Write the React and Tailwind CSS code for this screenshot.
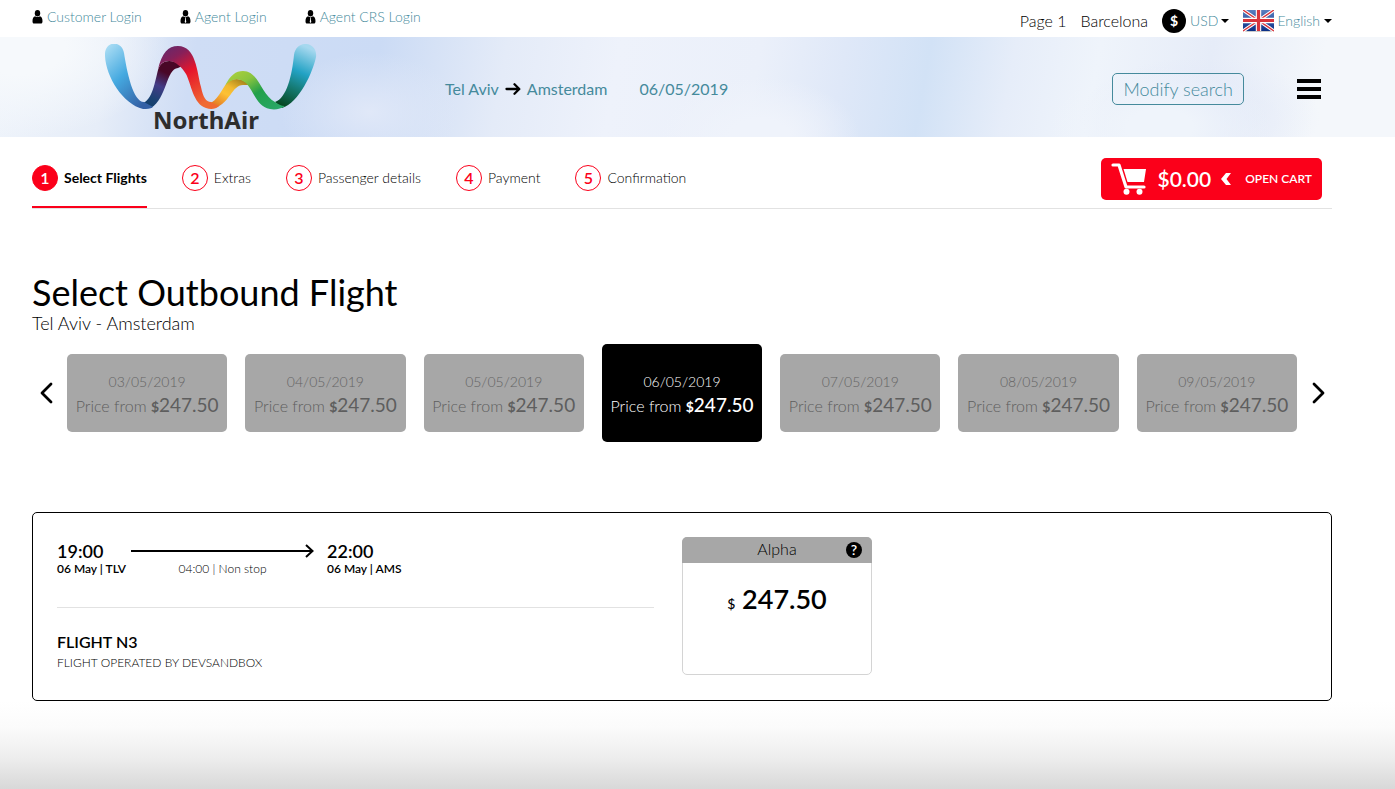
const logins = [
  { label: 'Customer Login', tie: false },
  { label: 'Agent Login', tie: true },
  { label: 'Agent CRS Login', tie: true },
];

const steps = ['Select Flights', 'Extras', 'Passenger details', 'Payment', 'Confirmation'];

const days = [
  '03/05/2019',
  '04/05/2019',
  '05/05/2019',
  '06/05/2019',
  '07/05/2019',
  '08/05/2019',
  '09/05/2019',
];

const selectedDay = '06/05/2019';

function UserIcon({ tie }) {
  return (
    <svg width="11" height="14" viewBox="0 0 10 14" aria-hidden="true">
      <ellipse cx="5" cy="3.2" rx="2.7" ry="3.2" />
      <path d="M0 11.2C0 8 1 6.6 2.6 6.2C4 7.4 6 7.4 7.4 6.2C9 6.6 10 8 10 11.2C10 13 9.4 13.5 8.4 13.5H1.6C.6 13.5 0 13 0 11.2Z" />
      {tie && <path d="M4.4 7.6H5.6L5.3 8.8L5.8 12L5 13L4.2 12L4.7 8.8Z" fill="#fff" />}
    </svg>
  );
}

function Logo() {
  return (
    <svg width="212" height="66" viewBox="0 0 212 66" role="img" aria-label="NorthAir logo">
      <defs>
        <linearGradient id="sky" x1="0" y1="0" x2=".7" y2="1">
          <stop offset="0" stopColor="#b4e2f6" />
          <stop offset=".5" stopColor="#45a9e0" />
          <stop offset="1" stopColor="#3460a5" />
        </linearGradient>
        <linearGradient id="violet" x1="0" y1="1" x2=".4" y2="0">
          <stop offset="0" stopColor="#0f3f68" />
          <stop offset=".25" stopColor="#1b4273" />
          <stop offset=".55" stopColor="#433c87" />
          <stop offset=".85" stopColor="#490727" />
        </linearGradient>
        <linearGradient id="red" x1="0" y1="0" x2=".6" y2="1">
          <stop offset="0" stopColor="#5c2b70" />
          <stop offset=".25" stopColor="#86205a" />
          <stop offset=".52" stopColor="#e6152b" />
          <stop offset="1" stopColor="#f06a32" />
        </linearGradient>
        <linearGradient id="yellow" x1="0" y1="1" x2=".8" y2="0">
          <stop offset="0" stopColor="#d9601f" />
          <stop offset=".5" stopColor="#fdc135" />
          <stop offset=".7" stopColor="#f0b92f" />
          <stop offset="1" stopColor="#a5821c" />
        </linearGradient>
        <linearGradient id="green" x1="0" y1="0" x2="1" y2="1">
          <stop offset="0" stopColor="#b3d33c" />
          <stop offset=".3" stopColor="#8ac43f" />
          <stop offset=".55" stopColor="#22a04a" />
          <stop offset="1" stopColor="#2aa96c" />
        </linearGradient>
        <linearGradient id="teal" x1=".6" y1="0" x2=".3" y2="1">
          <stop offset="0" stopColor="#a6d8ef" />
          <stop offset=".4" stopColor="#22a2c4" />
          <stop offset=".7" stopColor="#14766b" />
          <stop offset="1" stopColor="#064720" />
        </linearGradient>
      </defs>
      <path d="M38 59C47 56 50 38 53 26C56 16 66 14 77 22L73 24C61 25 62 54 46 64Z" fill="url(#violet)" />
      <path d="M104 59C112 58 116 46 122 39C128 33 138 34 144 41H138C127 41 125 59 110 64Z" fill="url(#yellow)" />
      <path d="M170 58C182 54 187 31 189 11C191 -5 213 -3 211 13C208 28 194 59 177 64Z" fill="url(#teal)" />
      <path d="M0 12C-1 -4 17 -4 19 9C22 28 28 58 39 58C42 60 45 61 48 63C45 65 42 65 38 65C18 60 1 33 0 12Z" fill="url(#sky)" />
      <path d="M53 25C57 9 63 2 73 2C91 2 92 28 96 43C98 53 101 58 106 58C109 60 112 61 114 62C111 65 106 66 101 64C88 60 86 39 81 30C77 23 70 17 64 17C59 17 56 19 53 25Z" fill="url(#red)" />
      <path d="M120 42C125 31 131 27 138 27C154 27 156 51 170 58C173 60 176 62 180 62C176 65 170 66 165 65C151 62 149 47 141 39C134 33 126 34 120 42Z" fill="url(#green)" />
    </svg>
  );
}

function Flag() {
  return (
    <svg width="31" height="22" viewBox="0 0 31 22" aria-hidden="true">
      <defs>
        <linearGradient id="flag-blue" x1="0" y1="0" x2="0" y2="1">
          <stop offset="0" stopColor="#5b7fc0" />
          <stop offset="1" stopColor="#0a2f86" />
        </linearGradient>
      </defs>
      <rect y="1" width="31" height="21" fill="#ccc" />
      <rect width="31" height="21" fill="url(#flag-blue)" />
      <path d="M0 0L31 21M31 0L0 21" stroke="#fff" strokeWidth="3.400" />
      <path d="M0 0L31 21M31 0L0 21" stroke="#d8343c" strokeWidth="1.400" />
      <path d="M15.500 0V21M0 10.500H31" stroke="#fff" strokeWidth="5.400" />
      <path d="M15.500 0V21M0 10.500H31" stroke="#d8343c" strokeWidth="3.200" />
    </svg>
  );
}

function Caret() {
  return (
    <svg width="8" height="4" viewBox="0 0 8 4" aria-hidden="true">
      <path d="M0 0H8L4 4Z" />
    </svg>
  );
}

function TopBar() {
  return (
    <div className="flex h-[37px] justify-between pl-8 pr-[63px]">
      <nav className="flex h-[34px] items-center gap-[38px]">
        {logins.map((l) => (
          <a key={l.label} href="#" className="flex items-center gap-1 text-sm font-light text-[#458a9c]">
            <UserIcon tie={l.tie} />
            {l.label}
          </a>
        ))}
      </nav>
      <div className="flex items-center pt-1 text-base font-light">
        <span className="mr-[14px]">Page 1</span>
        <span className="mr-[14px]">Barcelona</span>
        <span className="mr-1 flex size-6 items-center justify-center rounded-full bg-black text-sm font-bold text-white">$</span>
        <select aria-label="Currency" className="mr-[3px] appearance-none text-sm text-[#458a9c] field-sizing-content">
          <option>USD</option>
        </select>
        <Caret />
        <span className="ml-[14px] mr-[3px]">
          <Flag />
        </span>
        <select aria-label="Language" className="mr-1 appearance-none text-sm text-[#458a9c] field-sizing-content">
          <option>English</option>
        </select>
        <Caret />
      </div>
    </div>
  );
}

function Banner() {
  return (
    <header className="flex h-[100px] items-center bg-[#e9effa] bg-[radial-gradient(ellipse_90px_60px_at_370px_75px,#e0e8f8,transparent),radial-gradient(ellipse_150px_90px_at_20px_10px,#f6f9fc_30%,transparent),radial-gradient(ellipse_110px_60px_at_1160px_90px,#eff4fb_30%,transparent),radial-gradient(ellipse_120px_60px_at_1200px_80px,#e2e9f8,transparent),radial-gradient(ellipse_100px_60px_at_760px_100px,#eff3fb_30%,transparent),linear-gradient(100deg,#eff4fb,#e6edf8_8%,#cfddf5_14%,#cbdbf5_27%,#d6e2f6_31%,#e4ebf8_36%,#eef2fb_44%,#ebf0fa_54%,#dfe8f8_60%,#d2e2f6_66%,#e6edf9_72%,#eff4fb_78%,#e6ecf8_86%,#f4f7fb_94%)] pl-[105px] pr-[74px]">
      <div className="flex w-[340px] flex-col">
        <Logo />
        <span className="w-[202px] text-center font-['Noto_Sans'] text-2xl leading-5 font-bold text-[#2d2d2d]">NorthAir</span>
      </div>
      <div className="flex flex-1 items-center pt-1 text-base text-[#458a9c]">
        Tel Aviv
        <svg className="mx-[6px]" width="16" height="12" viewBox="0 0 16 12" fill="none" stroke="#000" strokeWidth="2.300" strokeLinecap="round" strokeLinejoin="round" aria-hidden="true">
          <path d="M1.500 6H14M9.500 1.300L14.300 6L9.500 10.700" />
        </svg>
        Amsterdam
        <span className="ml-8">06/05/2019</span>
      </div>
      <button className="mt-1 h-8 rounded-[5px] border border-[#458a9c] px-[10px] text-lg leading-7 font-light text-[#458a9c]">
        Modify search
      </button>
      <button aria-label="Menu" className="mt-1 ml-[53px] flex w-6 flex-col gap-1">
        <span className="h-1 bg-black" />
        <span className="h-1 bg-black" />
        <span className="h-1 bg-black" />
      </button>
    </header>
  );
}

function Steps() {
  return (
    <div className="flex items-end justify-between border-b border-[#e2e2e2]">
      <ol className="flex gap-[35px] text-sm font-light">
        {steps.map((step, i) => (
          <li
            key={step}
            className={`flex h-[43px] items-start gap-[6px] border-b-2 ${
              i === 0 ? 'border-[#fb001a] font-bold' : 'border-transparent'
            }`}
          >
            <span
              className={`flex size-[26px] items-center justify-center rounded-full border border-[#fb001a] text-base font-semibold ${
                i === 0 ? 'bg-[#fb001a] text-white' : 'text-[#fb001a]'
              }`}
            >
              {i + 1}
            </span>
            <span className="leading-[26px]">{step}</span>
          </li>
        ))}
      </ol>
      <button className="mt-[21px] mr-[10px] mb-2 flex h-[42px] items-center rounded-[5px] bg-[#fb001a] px-[10px] font-semibold text-white">
        <svg width="36" height="32" viewBox="0 0 36 32" fill="#fff" aria-hidden="true">
          <path d="M2 2H8L15 24H33" fill="none" stroke="#fff" strokeWidth="3.200" strokeLinecap="round" strokeLinejoin="round" />
          <path d="M12.500 6H35L33 19H16.500Z" />
          <circle cx="15.500" cy="28.800" r="3" />
          <circle cx="28.500" cy="28.800" r="3" />
        </svg>
        <span className="ml-[10px] text-[21px]">$0.00</span>
        <svg className="ml-[10px]" width="10" height="12" viewBox="0 0 10 12" fill="#fff" aria-hidden="true">
          <path d="M5 0H10L5.500 6L10 12H5L0 6Z" />
        </svg>
        <span className="ml-[14px] text-xs">OPEN CART</span>
      </button>
    </div>
  );
}

function Chevron({ next }) {
  return (
    <svg width="14" height="22" viewBox="0 0 14 22" fill="none" stroke="#000" strokeWidth="2.800" strokeLinecap="round" strokeLinejoin="round" aria-hidden="true">
      <path d={next ? 'M2 2L11 11L2 20' : 'M12 2L3 11L12 20'} />
    </svg>
  );
}

function DayPicker() {
  return (
    <div className="mt-[11px] flex items-center">
      <button aria-label="Previous days" className="flex w-[35px] justify-center pr-2">
        <Chevron />
      </button>
      <div className="flex flex-1 items-center gap-[18px]">
        {days.map((day) => (
          <button
            key={day}
            className={`flex flex-1 flex-col items-center justify-center rounded-[5px] pt-1 font-light whitespace-nowrap ${
              day === selectedDay ? 'h-[98px] bg-black text-white' : 'h-[78px] bg-[#a7a7a7] text-[#646464]'
            }`}
          >
            <span className="text-sm leading-5">{day}</span>
            <span className={`text-base leading-[26px] ${day === selectedDay ? 'text-white' : 'text-[#5e5e5e]'}`}>
              Price from <b className="text-sm font-bold">$</b>
              <span className={day === selectedDay ? 'text-[19px] font-medium' : 'text-[19px] font-normal'}>247.50</span>
            </span>
          </button>
        ))}
      </div>
      <button aria-label="Next days" className="flex w-[35px] justify-center pl-2">
        <Chevron next />
      </button>
    </div>
  );
}

function FlightCard() {
  return (
    <section className="mt-[70px] flex gap-7 rounded-[5px] border border-black px-6 pt-6 pb-[25px]">
      <div className="w-[597px]">
        <div className="flex pt-1">
          <div className="w-[74px]">
            <div className="text-lg leading-5 font-semibold">19:00</div>
            <div className="text-xs font-semibold">06 May | TLV</div>
          </div>
          <div className="mr-[13px] w-[183px] text-center text-xs font-light">
            <svg className="block h-5" width="183" height="20" viewBox="0 0 183 20" fill="none" stroke="#000" strokeWidth="2" aria-hidden="true">
              <path d="M0 10H181M175 4L181.500 10L175 16" />
            </svg>
            04:00 | Non stop
          </div>
          <div>
            <div className="text-lg leading-5 font-semibold">22:00</div>
            <div className="text-xs font-semibold">06 May | AMS</div>
          </div>
        </div>
        <hr className="mt-[30px] border-[#e2e2e2]" />
        <h2 className="mt-[22px] text-base font-semibold">FLIGHT N3</h2>
        <p className="text-xs leading-[18px] font-light">FLIGHT OPERATED BY DEVSANDBOX</p>
      </div>
      <div className="h-[138px] w-[190px] rounded-[5px] border border-[#d4d4d4] text-center">
        <div className="relative -m-px h-[26px] rounded-t-[5px] bg-[#a7a7a7] text-base leading-6 font-light">
          Alpha
          <button aria-label="About this fare" className="absolute top-[5px] right-[10px] size-4 rounded-full bg-black text-sm leading-4 font-semibold text-white">
            ?
          </button>
        </div>
        <p className="pt-[17px] text-[27px] leading-10 font-semibold">
          <span className="text-sm font-medium">$</span> 247.50
        </p>
      </div>
    </section>
  );
}

function App() {
  return (
    <div className="flex min-h-screen flex-col bg-white font-[Lato,sans-serif] text-black">
      <TopBar />
      <Banner />
      <main className="pl-8 pr-[63px]">
        <Steps />
        <h1 className="mt-[61px] text-4xl leading-[44px]">Select Outbound Flight</h1>
        <p className="text-lg leading-[19px] font-light">Tel Aviv - Amsterdam</p>
        <DayPicker />
        <FlightCard />
      </main>
      <div className="min-h-[88px] flex-1 bg-[linear-gradient(#fff,#fbfbfb_30%,#ededed_65%,#d8d8d8)]" />
    </div>
  );
}

export default App;
